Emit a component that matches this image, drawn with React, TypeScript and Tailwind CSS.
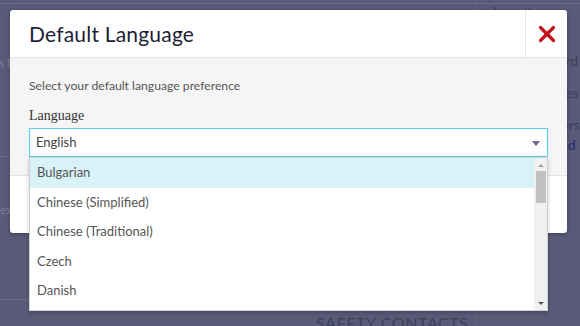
import { X } from 'lucide-react';

const languages = ['Bulgarian', 'Chinese (Simplified)', 'Chinese (Traditional)', 'Czech', 'Danish'];

export default function App() {
  return (
    <div className="relative w-[580px] h-[326px] overflow-hidden bg-[#585a77] font-['Lato',sans-serif]">
      {/* page behind the backdrop */}
      <div className="flex h-full">
        <div className="w-[498px] flex flex-col">
          <div className="h-[4px] shrink-0 border-b border-[#6a6c87]" />
          <div className="h-[153px] shrink-0 border-b border-[#6a6c87] pt-[50px] text-[12px] text-[#7d7f97] whitespace-nowrap">
            <span className="-ml-[1px]">s b</span>
          </div>
          <div className="h-[143px] shrink-0 border-b border-[#6a6c87] pt-[44px] text-[12px] text-[#7d7f97] whitespace-nowrap">
            <span className="-ml-[4px]">text</span>
          </div>
          <div className="shrink-0 pl-[316px] pt-[11px] text-[16px] leading-[24px] tracking-[0.6px] text-[#3c3f5c] whitespace-nowrap">
            SAFETY CONTACTS
          </div>
        </div>
        <div className="flex-1 border-l border-[#62647f] flex flex-col text-[14px] text-[#3b3e5c] leading-[16px] whitespace-nowrap">
          <div className="border-b border-[#6a6c87] h-[4px]" />
          <div className="pl-[16px]">Inventory a</div>
          <div className="pl-[69px]">s</div>
          <div className="pl-[46px] pt-[17px]">Standard</div>
          <div className="pl-[68px] pt-[16px]">Roles</div>
          <div className="pl-[68px] pt-[16px]">Users</div>
          <div className="pl-[34px] pt-[4px] font-bold text-[#2d3575]">Download</div>
        </div>
      </div>

      {/* modal */}
      <div className="absolute left-[10px] top-[10px] w-[557px] h-[223px] rounded-[3px] bg-white flex flex-col shadow-[0_1px_4px_rgba(0,0,0,0.25)]">
        <div className="h-[48px] flex border-b border-[#e3e3e3] shrink-0">
          <h2 className="flex-1 flex items-center pl-[19px] text-[21px] text-[#1d1f36] tracking-[0.2px]">
            Default Language
          </h2>
          <button className="w-[42px] border-l border-[#e6e6e6] flex items-center justify-center text-[#c3141b]">
            <X size={26} strokeWidth={3} />
          </button>
        </div>
        <div className="bg-[#f5f5f5] h-[118px] px-[19px] pt-[20px] border-b border-[#e3e3e3] shrink-0">
          <p className="text-[12.2px] leading-[16px] text-[#555]">Select your default language preference</p>
          <label className="block mt-[14px] text-[14px] leading-[16px] text-[#333] font-['Liberation_Serif',serif]">
            Language
          </label>
          <div className="relative mt-[4px] h-[29px] bg-white border border-[#5ccde9] flex items-center pl-[6px] text-[13px] text-[#444]">
            English
            <span className="absolute right-[7px] top-[12px] w-0 h-0 border-l-[4px] border-r-[4px] border-t-[5px] border-l-transparent border-r-transparent border-t-[#6b6d8b]" />
            <div className="absolute left-[-1px] right-[-1px] top-[28px] h-[154px] bg-white border border-[#cfcfcf] shadow-[0_2px_4px_rgba(0,0,0,0.2)] flex">
              <ul className="flex-1">
                {languages.map((lang, i) => (
                  <li
                    key={lang}
                    className={`h-[29.5px] flex items-center pl-[7px] text-[13px] text-[#555] ${i === 0 ? 'bg-[#d9f2f8]' : ''}`}
                  >
                    {lang}
                  </li>
                ))}
              </ul>
              <div className="w-[13px] bg-[#f1f1f1] flex flex-col items-center">
                <span className="mt-[6px] w-0 h-0 border-l-[3px] border-r-[3px] border-b-[3px] border-l-transparent border-r-transparent border-b-[#a3a3a3]" />
                <div className="mt-[4px] w-[10px] h-[32px] bg-[#c1c1c1]" />
                <div className="flex-1" />
                <span className="mb-[5px] w-0 h-0 border-l-[3px] border-r-[3px] border-t-[3px] border-l-transparent border-r-transparent border-t-[#505050]" />
              </div>
            </div>
          </div>
        </div>
        <div className="flex-1" />
      </div>
    </div>
  );
}
